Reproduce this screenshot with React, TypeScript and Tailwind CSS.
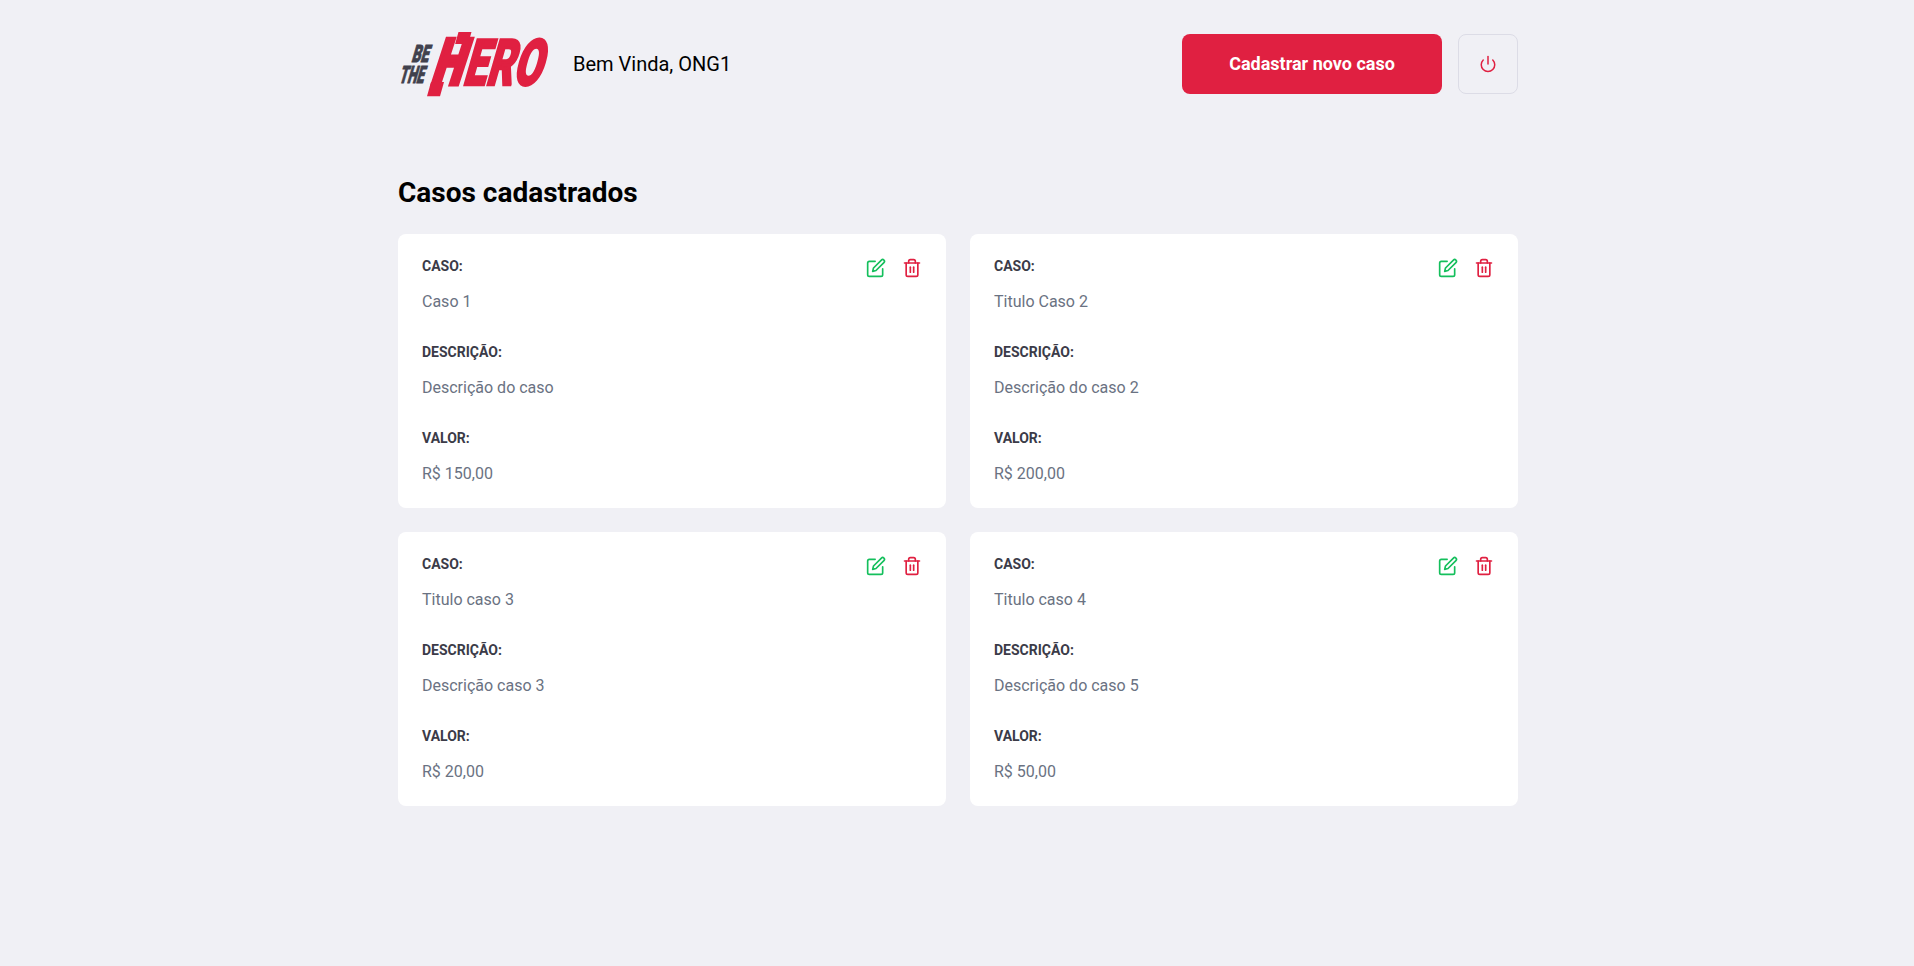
import { FiEdit, FiPower, FiTrash2 } from "react-icons/fi"

const cases = [
  { title: "Caso 1", description: "Descrição do caso", value: "R$ 150,00" },
  { title: "Titulo Caso 2", description: "Descrição do caso 2", value: "R$ 200,00" },
  { title: "Titulo caso 3", description: "Descrição caso 3", value: "R$ 20,00" },
  { title: "Titulo caso 4", description: "Descrição do caso 5", value: "R$ 50,00" },
]

const Logo = () => {
  return (
    <svg width="151" height="64" viewBox="0 0 151 64" className="shrink-0 overflow-visible">
      <g fill="#41414d" stroke="#41414d" strokeWidth="1" fontFamily="Roboto, sans-serif" fontWeight="900" fontSize="24">
        <text transform="translate(13 30) skewX(-16) scale(0.58 1)">BE</text>
        <text transform="translate(0.5 51) skewX(-16) scale(0.54 1)">THE</text>
      </g>
      <g fill="#e02041" stroke="#e02041" fontFamily="Roboto, sans-serif" fontWeight="900">
        <text fontSize="63" strokeWidth="5" transform="translate(32 52) skewX(-18) scale(0.68 1)">H</text>
        <text fontSize="64" strokeWidth="2.5" transform="translate(64 53) skewX(-16) scale(0.64 1)">ERO</text>
      </g>
      {/* the H of the logo has its stems offset */}
      <polygon fill="#e02041" points="33,50 46,50 42,64.3 29,64.3" />
      <polygon fill="#e02041" points="60.5,0 73.5,0 70.1,12 57.1,12" />
    </svg>
  )
}

const CaseCard = ({ title, description, value }: { title: string; description: string; value: string }) => {
  return (
    <li className="relative bg-white rounded-lg p-6">
      <strong className="block text-sm leading-[17px] font-bold text-[#3b3b48] mb-4">CASO:</strong>
      <p className="text-base leading-[21px] text-gray-500">{title}</p>
      <strong className="block text-sm leading-[17px] font-bold text-[#3b3b48] mt-8 mb-4">DESCRIÇÃO:</strong>
      <p className="text-base leading-[21px] text-gray-500">{description}</p>
      <strong className="block text-sm leading-[17px] font-bold text-[#3b3b48] mt-8 mb-4">VALOR:</strong>
      <p className="text-base leading-[21px] text-gray-500">{value}</p>
      <div className="absolute top-6 right-6 flex gap-4">
        <button type="button">
          <FiEdit size={20} color="#14bf5c" />
        </button>
        <button type="button">
          <FiTrash2 size={20} color="#e02041" />
        </button>
      </div>
    </li>
  )
}

const App = () => {
  return (
    <div className="min-h-screen bg-[#f0f0f5] pl-[2px] font-['Roboto',sans-serif]">
      <div className="w-[1120px] mx-auto py-8">
        <header className="flex items-center">
          <Logo />
          <span className="text-xl text-black ml-6">Bem Vinda, ONG1</span>
          <button type="button" className="ml-auto w-[260px] h-[60px] bg-[#e02041] rounded-lg text-white text-lg font-bold">
            Cadastrar novo caso
          </button>
          <button type="button" className="ml-4 w-[60px] h-[60px] rounded-lg border border-[#dcdce6] flex items-center justify-center">
            <FiPower size={18} color="#e02041" />
          </button>
        </header>

        <h1 className="text-[28px] leading-[34px] font-bold text-black mt-20 mb-6">Casos cadastrados</h1>

        <ul className="grid grid-cols-2 gap-6">
          {cases.map((c) => (
            <CaseCard key={c.title} title={c.title} description={c.description} value={c.value} />
          ))}
        </ul>
      </div>
    </div>
  )
}

export default App
